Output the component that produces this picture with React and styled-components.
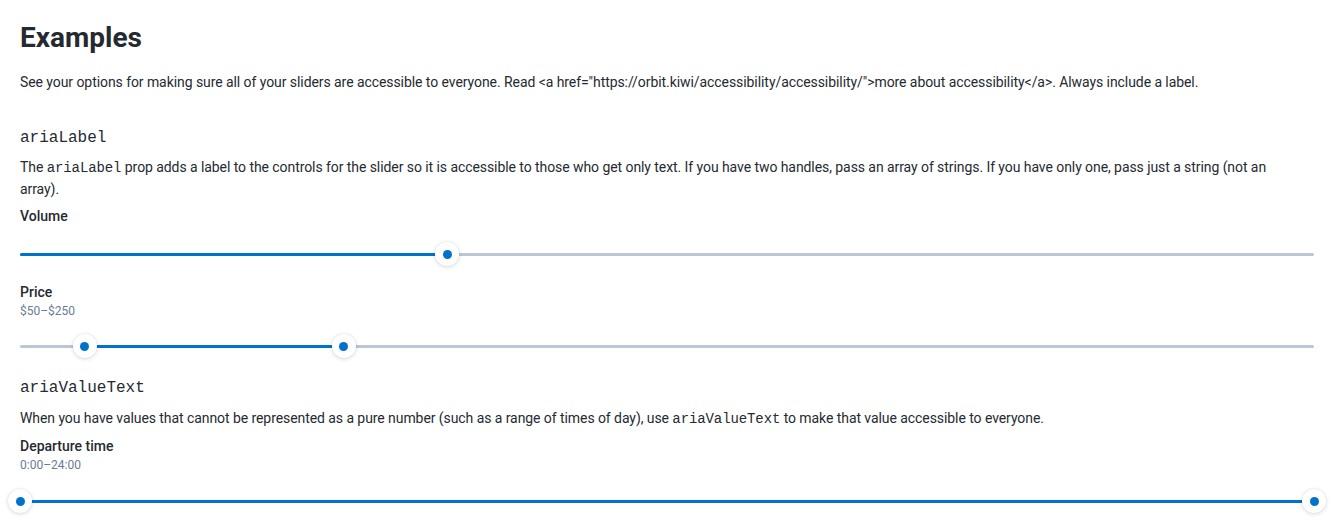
import React from "react";
import styled, { createGlobalStyle } from "styled-components";

const GlobalStyle = createGlobalStyle`
  body {
    margin: 0;
    background: #ffffff;
    font-family: Roboto, "Liberation Sans", sans-serif;
    color: #252a31;
  }
`;

const Page = styled.div`
  padding: 20px 20px 0;
  display: flex;
  flex-direction: column;
`;

const Title = styled.h1`
  margin: 0;
  font-size: 28px;
  line-height: 36px;
  font-weight: 700;
`;

const Text = styled.p`
  margin: ${(p) => p.$top || 0}px 0 0;
  max-width: 1280px;
  font-size: 14px;
  line-height: 21px;
  letter-spacing: -0.07px;
`;

const Code = styled.code`
  font-family: "Liberation Mono", monospace;
  font-size: 14px;
  letter-spacing: -0.1px;
`;

const SectionTitle = styled.h3`
  margin: ${(p) => p.$top}px 0 0;
  font-family: "Liberation Mono", monospace;
  font-size: 16px;
  line-height: 24px;
  font-weight: 400;
`;

const Field = styled.div`
  margin-top: ${(p) => p.$top}px;
  display: flex;
  flex-direction: column;
`;

const Label = styled.span`
  font-size: 14px;
  line-height: 20px;
  font-weight: 500;
`;

const Value = styled.span`
  font-size: 12px;
  line-height: 18px;
  color: #697d95;
`;

const Track = styled.div`
  position: relative;
  margin-top: ${(p) => p.$top}px;
  height: 32px;
`;

const Bar = styled.div`
  position: absolute;
  left: 0;
  right: 0;
  top: 14px;
  height: 3px;
  border-radius: 2px;
  background: #bac7d5;
`;

const Fill = styled.div`
  position: absolute;
  top: 14px;
  height: 3px;
  border-radius: 2px;
  background: #0172cb;
`;

const Handle = styled.div`
  position: absolute;
  top: 3px;
  width: 24px;
  height: 24px;
  margin-left: -12px;
  border-radius: 50%;
  background: #ffffff;
  box-shadow: 0 1px 4px rgba(37, 42, 49, 0.16), 0 0 2px rgba(37, 42, 49, 0.1);
  display: flex;
  align-items: center;
  justify-content: center;

  &::after {
    content: "";
    width: 9px;
    height: 9px;
    border-radius: 50%;
    background: #0172cb;
  }
`;

const Slider = ({ min, max, values, top = 12 }) => {
  const pct = (v) => ((v - min) / (max - min)) * 100;
  const start = values.length > 1 ? pct(values[0]) : 0;
  const end = pct(values[values.length - 1]);
  return (
    <Track $top={top}>
      <Bar />
      <Fill style={{ left: `${start}%`, width: `${end - start}%` }} />
      {values.map((v, i) => (
        <Handle key={i} style={{ left: `${pct(v)}%` }} />
      ))}
    </Track>
  );
};

const App = () => (
  <>
    <GlobalStyle />
    <Page>
      <Title>Examples</Title>
      <Text $top={16}>
        See your options for making sure all of your sliders are accessible to
        everyone. Read &lt;a
        href="https://orbit.kiwi/accessibility/accessibility/"&gt;more about
        accessibility&lt;/a&gt;. Always include a label.
      </Text>

      <SectionTitle $top={33}>ariaLabel</SectionTitle>
      <Text $top={7}>
        The <Code>ariaLabel</Code> prop adds a label to the controls for the
        slider so it is accessible to those who get only text. If you have two
        handles, pass an array of strings. If you have only one, pass just a
        string (not an array).
      </Text>
      <Field $top={6}>
        <Label>Volume</Label>
      </Field>
      <Slider min={0} max={100} values={[33]} top={13} />
      <Field $top={11}>
        <Label>Price</Label>
        <Value>$50–$250</Value>
      </Field>
      <Slider min={0} max={1000} values={[50, 250]} top={11} />

      <SectionTitle $top={13}>ariaValueText</SectionTitle>
      <Text $top={8}>
        When you have values that cannot be represented as a pure number (such
        as a range of times of day), use <Code>ariaValueText</Code> to make
        that value accessible to everyone.
      </Text>
      <Field $top={6}>
        <Label>Departure time</Label>
        <Value>0:00–24:00</Value>
      </Field>
      <Slider min={0} max={24} values={[0, 24]} top={12} />
    </Page>
  </>
);

export default App;
